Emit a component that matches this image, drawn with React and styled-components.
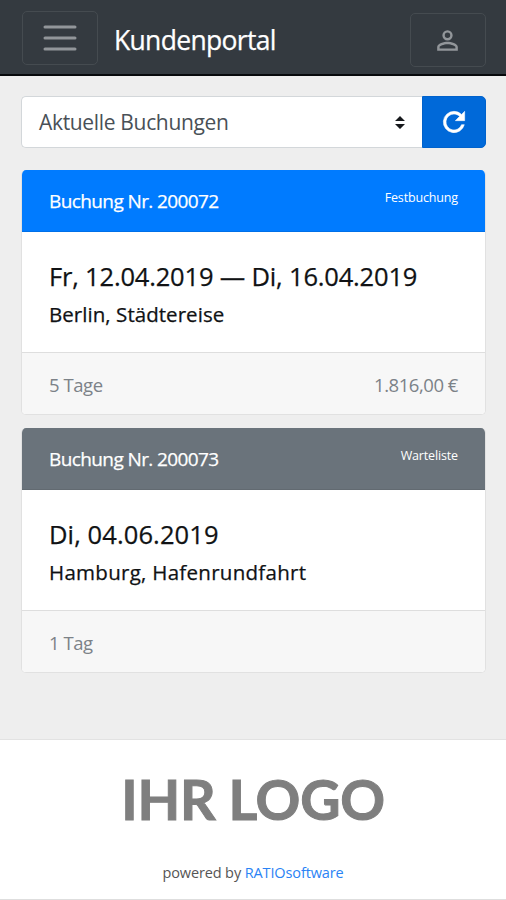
import React, { useState } from "react";
import styled, { createGlobalStyle } from "styled-components";

const GlobalStyle = createGlobalStyle`
  * {
    box-sizing: border-box;
  }
  body {
    margin: 0;
    background: #eeeeee;
    font-family: "Open Sans", "Noto Sans", sans-serif;
    color: #101214;
  }
`;

const Page = styled.div`
  display: flex;
  flex-direction: column;
  height: 900px;
  overflow: hidden;
`;

const Navbar = styled.header`
  display: flex;
  align-items: flex-start;
  height: 76px;
  padding: 11px 20px 0 22px;
  background: #343a40;
  border-bottom: 2px solid #07090c;
`;

const NavButton = styled.button`
  display: flex;
  align-items: center;
  justify-content: center;
  width: 76px;
  height: 54px;
  padding: 0 ${(props) => (props.$profile ? 2 : 0)}px 0 0;
  margin-top: ${(props) => (props.$profile ? 2 : 0)}px;
  background: transparent;
  border: 1px solid #454b50;
  border-radius: 5px;
  color: #92969a;
`;

const Brand = styled.h1`
  flex: 1;
  margin: 0 0 0 16px;
  font-size: 26.5px;
  font-weight: 400;
  line-height: 59px;
  letter-spacing: -0.68px;
  color: #fff;
  -webkit-text-stroke: 0.25px currentColor;
`;

const Main = styled.main`
  flex: 1;
  padding: 20px 20px 0 21px;
`;

const FilterBar = styled.div`
  display: flex;
  height: 52px;
  margin-bottom: 22px;
`;

const FilterSelect = styled.button`
  display: flex;
  flex: 1;
  align-items: center;
  justify-content: space-between;
  padding: 0 17px;
  background: #fff;
  border: 1px solid #d3d7da;
  border-right: none;
  border-radius: 5px 0 0 5px;
  font-family: inherit;
  font-size: 21px;
  letter-spacing: -0.33px;
  color: #495057;
`;

const RefreshButton = styled.button`
  display: flex;
  align-items: center;
  justify-content: center;
  width: 64px;
  padding: 0;
  background: #0069d9;
  border: 1px solid #0062cc;
  border-radius: 0 5px 5px 0;
  color: #fff;
`;

const Card = styled.section`
  height: 245px;
  margin-bottom: 13px;
  overflow: hidden;
  background: #fff;
  border: 1px solid #e1e1e1;
  border-top: none;
  border-radius: 5px;
`;

const CardHeader = styled.div`
  display: flex;
  justify-content: space-between;
  height: 62px;
  padding: 0 27px;
  background: ${(props) => (props.$waiting ? "#6a737b" : "#007bff")};
  border-bottom: 1px solid ${(props) => (props.$waiting ? "#626a71" : "#0070e8")};
  color: #fff;
`;

const BookingNumber = styled.span`
  font-size: 19px;
  line-height: 63px;
  letter-spacing: -0.6px;
  -webkit-text-stroke: 0.25px currentColor;
`;

const Status = styled.span`
  font-size: 12.5px;
  line-height: 55px;
  letter-spacing: -0.15px;
`;

const CardBody = styled.div`
  height: 120px;
  padding: 25px 27px 0;
  -webkit-text-stroke: 0.25px currentColor;
`;

const DateLine = styled.div`
  font-size: 25.5px;
  line-height: 38px;
  letter-spacing: ${(props) => props.$spacing}px;
  white-space: nowrap;
`;

const Destination = styled.div`
  font-size: 20.5px;
  line-height: 38px;
  letter-spacing: ${(props) => props.$spacing}px;
`;

const CardFooter = styled.div`
  display: flex;
  justify-content: space-between;
  height: 62px;
  padding: 0 27px;
  background: #f7f7f7;
  border-top: 1px solid #dedede;
  font-size: 18.5px;
  line-height: 64px;
  letter-spacing: -0.45px;
  color: #7c8288;
`;

const Footer = styled.footer`
  height: 161px;
  background: #fff;
  border-top: 1px solid #e2e2e2;
  border-bottom: 1px solid #dedede;
  text-align: center;
`;

const Logo = styled.div`
  margin-top: 24px;
  font-family: Lato, sans-serif;
  font-size: 55.5px;
  font-weight: 700;
  line-height: 70px;
  letter-spacing: -0.3px;
  color: #7f7f7f;
  -webkit-text-stroke: 1px #7f7f7f;
`;

const Powered = styled.div`
  margin-top: 26px;
  font-size: 14.5px;
  line-height: 25px;
  letter-spacing: -0.12px;
  color: #555;
`;

const Link = styled.a`
  color: #2a83f5;
  text-decoration: none;
`;

const bookings = [
  {
    id: "200072",
    status: "Festbuchung",
    date: "Fr, 12.04.2019 — Di, 16.04.2019",
    dateSpacing: -0.18,
    destination: "Berlin, Städtereise",
    destinationSpacing: 0.05,
    duration: "5 Tage",
    price: "1.816,00 €",
  },
  {
    id: "200073",
    status: "Warteliste",
    waiting: true,
    date: "Di, 04.06.2019",
    dateSpacing: 0.1,
    destination: "Hamburg, Hafenrundfahrt",
    destinationSpacing: 0.28,
    duration: "1 Tag",
  },
];

const MenuIcon = () => (
  <svg width="34" height="28" viewBox="0 0 34 28" stroke="currentColor" strokeWidth="3" strokeLinecap="round">
    <path d="M2 3h30M2 14h30M2 25h30" />
  </svg>
);

const UserIcon = () => (
  <svg width="31" height="31" viewBox="0 0 24 24" fill="currentColor">
    <path d="M12 5.9a2.1 2.1 0 1 1 0 4.2 2.1 2.1 0 0 1 0-4.2m0 9c2.97 0 6.1 1.46 6.1 2.1v1.1H5.9V17c0-.64 3.13-2.1 6.1-2.1M12 4a4 4 0 1 0 0 8 4 4 0 0 0 0-8m0 9c-2.67 0-8 1.34-8 4v3h16v-3c0-2.66-5.33-4-8-4" />
  </svg>
);

const SortIcon = () => (
  <svg width="10" height="13" viewBox="0 0 10 13" fill="#17191c">
    <path d="M0 5L5 0l5 5zM0 8h10l-5 5z" />
  </svg>
);

const RefreshIcon = () => (
  <svg width="32" height="32" viewBox="0 0 24 24" fill="currentColor" stroke="currentColor" strokeWidth="0.4">
    <path d="M17.65 6.35A7.96 7.96 0 0 0 12 4a8 8 0 1 0 7.73 10h-2.08A6 6 0 1 1 12 6c1.66 0 3.14.69 4.22 1.78L13 11h7V4z" />
  </svg>
);

const Booking = ({ booking }) => (
  <Card>
    <CardHeader $waiting={booking.waiting}>
      <BookingNumber>Buchung Nr. {booking.id}</BookingNumber>
      <Status>{booking.status}</Status>
    </CardHeader>
    <CardBody>
      <DateLine $spacing={booking.dateSpacing}>{booking.date}</DateLine>
      <Destination $spacing={booking.destinationSpacing}>{booking.destination}</Destination>
    </CardBody>
    <CardFooter>
      <span>{booking.duration}</span>
      {booking.price && <span>{booking.price}</span>}
    </CardFooter>
  </Card>
);

const App = () => {
  const [filter] = useState("Aktuelle Buchungen");

  return (
    <Page>
      <GlobalStyle />
      <Navbar>
        <NavButton aria-label="Menü">
          <MenuIcon />
        </NavButton>
        <Brand>Kundenportal</Brand>
        <NavButton $profile aria-label="Profil">
          <UserIcon />
        </NavButton>
      </Navbar>
      <Main>
        <FilterBar>
          <FilterSelect>
            <span>{filter}</span>
            <SortIcon />
          </FilterSelect>
          <RefreshButton aria-label="Aktualisieren">
            <RefreshIcon />
          </RefreshButton>
        </FilterBar>
        {bookings.map((booking) => (
          <Booking key={booking.id} booking={booking} />
        ))}
      </Main>
      <Footer>
        <Logo>IHR LOGO</Logo>
        <Powered>
          powered by <Link href="#">RATIOsoftware</Link>
        </Powered>
      </Footer>
    </Page>
  );
};

export default App;
